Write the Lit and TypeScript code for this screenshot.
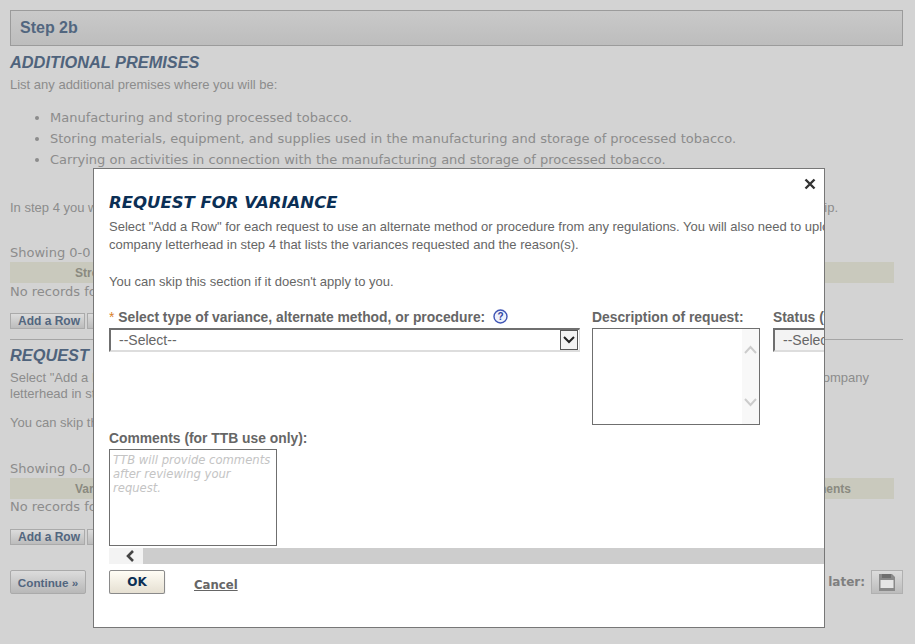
import { LitElement, html, css } from "lit";
import { customElement } from "lit/decorators.js";

@customElement("app-root")
class AppRoot extends LitElement {
  static styles = css`
    :host { display: block; position: relative; width: 915px; height: 644px; overflow: hidden; background: #d3d3d3; font-family: "Liberation Sans", Arial, sans-serif; font-size: 13px; color: #8c8c8c; }
    .page { padding: 10px 12px 0 10px; height: 644px; box-sizing: border-box; }
    .step { height: 36px; box-sizing: border-box; border: 1px solid #9b9b9b; background: linear-gradient(#c9c9c9, #bdbdbd); display: flex; align-items: center; padding-left: 9px; font-weight: bold; font-size: 16px; color: #52667f; }
    h2 { margin: 0; font-size: 16.35px; line-height: 18px; font-style: italic; font-weight: bold; color: #4f637c; }
    h2.first { margin-top: 7px; }
    .p { line-height: 18px; white-space: nowrap; margin-top: 5px; }
    ul { margin: 13px 0 0; padding: 0 0 0 40px; font-family: "DejaVu Sans", sans-serif; font-size: 13px; line-height: 21px; }
    .instep { margin-top: 29px; display: flex; justify-content: space-between; width: 828px; }
    .show { margin-top: 26px; padding-top: 1px; line-height: 17px; font-family: "DejaVu Sans", sans-serif; font-size: 13px; }
    .show.two { margin-top: 27px; }
    .head { margin-top: 1px; height: 21px; width: 884px; background: #c9c9bd; display: flex; align-items: center; font-size: 12px; font-weight: bold; color: #8a8a80; padding-left: 65px; box-sizing: border-box; justify-content: space-between; }
    .none { font-family: "DejaVu Sans", sans-serif; font-size: 13px; line-height: 16px; }
    .first-none { padding-top: 1px; line-height: 15px; }
    .add { margin-top: 14px; display: flex; gap: 2px; }
    .btn { display: inline-flex; align-items: center; height: 16px; box-sizing: border-box; border: 1px solid #aaa; background: linear-gradient(#dcdcdc, #bcbcbc); color: #52667f; font-size: 12px; font-weight: bold; padding: 0 7px; width: 75px; white-space: nowrap; }
    hr { margin: 10px 0 0; border: 0; border-top: 1px solid #a5a5a5; width: 893px; }
    .req { margin-top: 6px; }
    .s2 { line-height: 16px; margin-top: 6px; white-space: nowrap; display: flex; justify-content: space-between; width: 859px; }
    .l2 { line-height: 16px; white-space: nowrap; margin-bottom: -1px; }
    .skip { margin-top: 13px; line-height: 18px; }
    .foot { margin-top: 25px; display: flex; align-items: center; justify-content: space-between; width: 893px; }
    .cont { height: 24px; width: 76px; box-sizing: border-box; border: 1px solid #aaa; border-radius: 2px; background: linear-gradient(#dcdcdc, #b8b8b8); color: #52667f; font-size: 11.7px; font-weight: bold; display: flex; align-items: center; justify-content: center; }
    .later { display: flex; align-items: center; gap: 6px; font-weight: bold; font-size: 12px; color: #7f7f7f; font-family: "DejaVu Sans", sans-serif; }
    .disk { width: 32px; height: 24px; box-sizing: border-box; border: 1px solid #b0b0b0; background: linear-gradient(#dcdcdc, #bcbcbc); display: flex; align-items: center; justify-content: center; }

    .modal { position: absolute; left: 93px; top: 168px; width: 732px; height: 460px; box-sizing: border-box; border: 1px solid #777; background: #fff; color: #666; }
    .close { position: absolute; left: 710px; top: 9px; width: 12px; height: 12px; }
    .view { margin-left: 15px; width: 715px; overflow: hidden; padding-top: 24px; }
    .title { margin: 0; font-family: "DejaVu Sans", sans-serif; font-style: italic; font-weight: bold; font-size: 16.5px; line-height: 20px; color: #0b2f55; white-space: nowrap; }
    .intro { line-height: 18px; white-space: nowrap; width: 900px; margin-top: 5px; }
    .intro .gap { margin-top: 19px; }
    .row { display: grid; grid-template-columns: 483px 181px 200px; width: 900px; margin-top: 18px; }
    .lab { font-weight: bold; font-size: 13.85px; line-height: 16px; color: #666; white-space: nowrap; }
    .lab .star { color: #d9822b; font-weight: normal; }
    .q { display: inline-block; vertical-align: -2px; margin-left: 4px; }
    .sel { margin-top: 3px; box-sizing: border-box; height: 24px; border: 2px solid #6f6f6f; border-right-color: #ddd; border-bottom-color: #ddd; border-right-width: 1px; display: flex; align-items: center; font-size: 14px; color: #666; padding-left: 8px; position: relative; background: #fff; }
    .sel1 { width: 471px; }
    .sel2 { width: 140px; background: #f3f3f3; }
    .arrow { position: absolute; right: 1px; top: 0; width: 18px; height: 20px; box-sizing: border-box; border: 1px solid #555; background: #f3f3f3; display: flex; align-items: center; justify-content: center; }
    .ta { box-sizing: border-box; border: 1px solid #6f6f6f; width: 168px; margin-top: 3px; position: relative; }
    .ta1 { height: 97px; }
    .sb { position: absolute; right: 0; top: 0; bottom: 0; width: 17px; background: #f8f8f8; }
    .sb svg { position: absolute; left: 2px; }
    .lab2 { margin-top: 5px; }
    .ta2 { height: 97px; padding: 3px 0 0 3px; line-height: 14px; font-style: italic; color: #c4c4c4; font-family: "DejaVu Sans", sans-serif; font-size: 11.6px; }
    .hs { margin-top: 2px; height: 16px; display: flex; background: #f3f3f3; }
    .hs .al { width: 34px; display: flex; align-items: center; justify-content: center; padding-left: 8px; box-sizing: border-box; }
    .hs .tr { flex: 1; background: #cdcdcd; }
    .acts { display: flex; align-items: center; margin-top: 6px; }
    .ok { width: 56px; height: 24px; box-sizing: border-box; border: 1px solid #8a8a8a; border-radius: 2px; background: linear-gradient(#fffdf5, #e6e0d2); box-shadow: 0 1px 1px #aaa; font-family: "DejaVu Sans", sans-serif; font-weight: bold; font-size: 12px; color: #0b2f55; display: flex; align-items: center; justify-content: center; }
    .ok span { margin-top: -1px; }
    .cancel { margin-left: 29px; font-family: "DejaVu Sans", sans-serif; font-weight: bold; font-size: 11.7px; color: #666; text-decoration: underline; margin-top: 5px; }
  `;

  render() {
    return html`
      <div class="page">
        <div class="step">Step 2b</div>
        <h2 class="first">ADDITIONAL PREMISES</h2>
        <div class="p">List any additional premises where you will be:</div>
        <ul>
          <li>Manufacturing and storing processed tobacco.</li>
          <li>Storing materials, equipment, and supplies used in the manufacturing and storage of processed tobacco.</li>
          <li>Carrying on activities in connection with the manufacturing and storage of processed tobacco.</li>
        </ul>
        <div class="p instep"><span>In step 4 you will need to upload</span><span>ownership.</span></div>
        <div class="show">Showing 0-0</div>
        <div class="head"><span>Street</span></div>
        <div class="none first-none">No records found</div>
        <div class="add"><span class="btn">Add a Row</span><span class="btn"></span></div>
        <hr />
        <h2 class="req">REQUEST FOR VARIANCE</h2>
        <div class="s2"><span>Select "Add a Row" for each request</span><span>company</span></div>
        <div class="l2">letterhead in step 4</div>
        <div class="skip">You can skip this section</div>
        <div class="show two">Showing 0-0</div>
        <div class="head"><span>Variance</span><span style="margin-right:43px">Comments</span></div>
        <div class="none">No records found</div>
        <div class="add"><span class="btn">Add a Row</span><span class="btn"></span></div>
        <div class="foot">
          <span class="cont">Continue »</span>
          <span class="later">later:
            <span class="disk"><svg width="16" height="17" viewBox="0 0 16 17"><path d="M0 0h13l3 3v14H0z" fill="#8a8a8a"/><path d="M1.500 6h13v8h-13z" fill="#e6e6e6"/><path d="M3 0h9v4H3z" fill="#6f6f6f"/></svg></span>
          </span>
        </div>
      </div>
      <div class="modal">
        <svg class="close" viewBox="0 0 12 12"><path d="M1.500 1.500l9 9M10.500 1.500l-9 9" stroke="#333" stroke-width="2.400" fill="none"/></svg>
        <div class="view">
          <h3 class="title">REQUEST FOR VARIANCE</h3>
          <div class="intro">
            <div>Select "Add a Row" for each request to use an alternate method or procedure from any regulations. You will also need to upload a statement on</div>
            <div>company letterhead in step 4 that lists the variances requested and the reason(s).</div>
            <div class="gap">You can skip this section if it doesn't apply to you.</div>
          </div>
          <div class="row">
            <div>
              <div class="lab"><span class="star">*</span> Select type of variance, alternate method, or procedure:
                <svg class="q" width="15" height="15" viewBox="0 0 15 15"><circle cx="7.500" cy="7.500" r="6.500" fill="#eef1fb" stroke="#3f55b5" stroke-width="1.400"/><text x="7.500" y="11" text-anchor="middle" font-size="10" font-weight="bold" font-family="Liberation Sans" fill="#2f43a0">?</text></svg>
              </div>
              <div class="sel sel1">--Select--<span class="arrow"><svg width="12" height="8" viewBox="0 0 12 8"><path d="M1 1l5 5 5-5" stroke="#222" stroke-width="2" fill="none"/></svg></span></div>
            </div>
            <div>
              <div class="lab">Description of request:</div>
              <div class="ta ta1"><div class="sb">
                <svg style="top:16px" width="13" height="9" viewBox="0 0 13 9"><path d="M1 8l5.500-6 5.500 6" stroke="#ccc" stroke-width="2" fill="none"/></svg>
                <svg style="bottom:17px" width="13" height="9" viewBox="0 0 13 9"><path d="M1 1l5.500 6 5.500-6" stroke="#ccc" stroke-width="2" fill="none"/></svg>
              </div></div>
            </div>
            <div>
              <div class="lab">Status (for TTB use only):</div>
              <div class="sel sel2">--Select--</div>
            </div>
          </div>
          <div class="lab lab2">Comments (for TTB use only):</div>
          <div class="ta ta2">TTB will provide comments<br />after reviewing your<br />request.</div>
          <div class="hs"><span class="al"><svg width="10" height="12" viewBox="0 0 10 12"><path d="M8 1L3 6l5 5" stroke="#444" stroke-width="2.600" fill="none"/></svg></span><span class="tr"></span></div>
          <div class="acts"><span class="ok"><span>OK</span></span><span class="cancel">Cancel</span></div>
        </div>
      </div>
    `;
  }
}
